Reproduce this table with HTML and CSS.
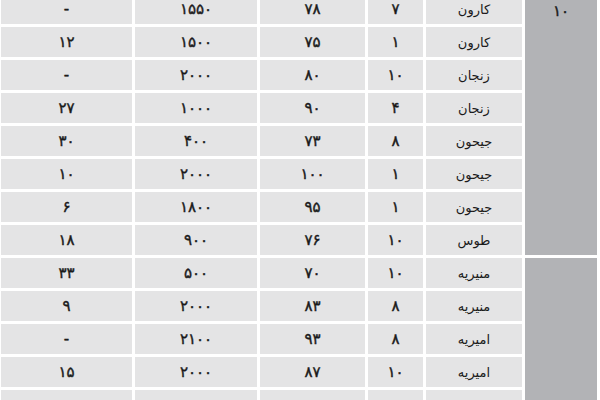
FILE: index.html
```html
<!DOCTYPE html>
<html lang="fa" dir="rtl">
<head>
<meta charset="utf-8">
<link rel="stylesheet" href="styles.css">
</head>
<body>
<table class="grid">
<colgroup>
<col class="c-a"><col class="c-b"><col class="c-c"><col class="c-d"><col class="c-e"><col class="c-f">
</colgroup>
<tbody>
<tr><td class="group" rowspan="8"><span class="glabel">۱۰</span></td><td class="name">کارون</td><td class="num">۷</td><td class="num">۷۸</td><td class="num">۱۵۵۰</td><td class="num">-</td></tr>
<tr><td class="name">کارون</td><td class="num">۱</td><td class="num">۷۵</td><td class="num">۱۵۰۰</td><td class="num">۱۲</td></tr>
<tr><td class="name">زنجان</td><td class="num">۱۰</td><td class="num">۸۰</td><td class="num">۲۰۰۰</td><td class="num">-</td></tr>
<tr><td class="name">زنجان</td><td class="num">۴</td><td class="num">۹۰</td><td class="num">۱۰۰۰</td><td class="num">۲۷</td></tr>
<tr><td class="name">جیحون</td><td class="num">۸</td><td class="num">۷۳</td><td class="num">۴۰۰</td><td class="num">۳۰</td></tr>
<tr><td class="name">جیحون</td><td class="num">۱</td><td class="num">۱۰۰</td><td class="num">۲۰۰۰</td><td class="num">۱۰</td></tr>
<tr><td class="name">جیحون</td><td class="num">۱</td><td class="num">۹۵</td><td class="num">۱۸۰۰</td><td class="num">۶</td></tr>
<tr><td class="name">طوس</td><td class="num">۱۰</td><td class="num">۷۶</td><td class="num">۹۰۰</td><td class="num">۱۸</td></tr>
<tr><td class="group" rowspan="5"></td><td class="name">منیریه</td><td class="num">۱۰</td><td class="num">۷۰</td><td class="num">۵۰۰</td><td class="num">۳۳</td></tr>
<tr><td class="name">منیریه</td><td class="num">۸</td><td class="num">۸۳</td><td class="num">۲۰۰۰</td><td class="num">۹</td></tr>
<tr><td class="name">امیریه</td><td class="num">۸</td><td class="num">۹۳</td><td class="num">۲۱۰۰</td><td class="num">-</td></tr>
<tr><td class="name">امیریه</td><td class="num">۱۰</td><td class="num">۸۷</td><td class="num">۲۰۰۰</td><td class="num">۱۵</td></tr>
<tr><td class="name"></td><td class="num"></td><td class="num"></td><td class="num"></td><td class="num"></td></tr>
</tbody>
</table>
</body>
</html>
```
FILE: styles.css
```css
html, body {
  margin: 0;
  padding: 0;
  background: #ffffff;
  overflow: hidden;
}
.grid {
  direction: rtl;
  table-layout: fixed;
  border-collapse: separate;
  border-spacing: 3px;
  width: 602px;
  margin: -9px 0 0 -3px;
  font-family: "DejaVu Sans", sans-serif;
  color: #1a1a1a;
}
.c-a { width: 72px; }
.c-b { width: 96px; }
.c-c { width: 55px; }
.c-d { width: 105px; }
.c-e { width: 122px; }
.c-f { width: 131px; }
.grid td {
  height: 30px;
  padding: 0;
  background: #e4e4e5;
  text-align: center;
  vertical-align: middle;
}
.grid td.group {
  background: #b2b3b6;
  vertical-align: top;
}
.glabel {
  display: block;
  padding-top: 8px;
  font-size: 15px;
  -webkit-text-stroke: 0.4px #1a1a1a;
}
.num {
  font-size: 15px;
  -webkit-text-stroke: 0.4px #1a1a1a;
}
.name {
  font-size: 13px;
}
```
